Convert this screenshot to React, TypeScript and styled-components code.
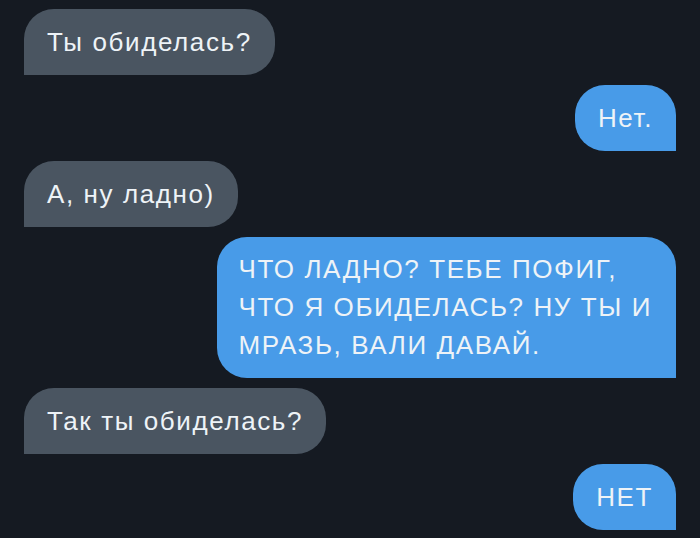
import styled, { createGlobalStyle } from "styled-components"

const GlobalStyle = createGlobalStyle`
    html, body {
        margin: 0;
        padding: 0;
        background: #151a22;
    }
    body {
        font-family: "Liberation Sans", Arial, sans-serif;
    }
`

type Side = "in" | "out"

const messages: { side: Side; lines: string[] }[] = [
    { side: "in", lines: ["Ты обиделась?"] },
    { side: "out", lines: ["Нет."] },
    { side: "in", lines: ["А, ну ладно)"] },
    { side: "out", lines: ["ЧТО ЛАДНО? ТЕБЕ ПОФИГ,", "ЧТО Я ОБИДЕЛАСЬ? НУ ТЫ И", "МРАЗЬ, ВАЛИ ДАВАЙ."] },
    { side: "in", lines: ["Так ты обиделась?"] },
    { side: "out", lines: ["НЕТ"] },
]

export default function App() {
    return (
        <>
            <GlobalStyle />
            <Chat>
                {messages.map((m, i) => (
                    <Row key={i} $side={m.side}>
                        <Bubble $side={m.side} $multi={m.lines.length > 1}>
                            {m.lines.map((l, j) => (
                                <Line key={j}>{l}</Line>
                            ))}
                        </Bubble>
                    </Row>
                ))}
            </Chat>
        </>
    )
}

const Chat = styled.div`
    width: 700px;
    height: 538px;
    box-sizing: border-box;
    padding: 9px 24px 0 24px;
    display: flex;
    flex-direction: column;
    gap: 10px;
    background: #151a22;
    overflow: hidden;
`

const Row = styled.div<{ $side: Side }>`
    display: flex;
    justify-content: ${(p) => (p.$side === "out" ? "flex-end" : "flex-start")};
`

const Bubble = styled.div<{ $side: Side; $multi: boolean }>`
    padding: ${(p) => (p.$multi ? "13px 24px 14px 22px" : "14px 23px")};
    font-size: 26px;
    letter-spacing: 1.6px;
    line-height: 38px;
    color: #eef3f7;
    background: ${(p) => (p.$side === "out" ? "#489be8" : "#4a5561")};
    border-radius: ${(p) => (p.$side === "out" ? "30px 30px 0 30px" : "30px 30px 30px 0")};
`

const Line = styled.div`
    white-space: nowrap;
`
